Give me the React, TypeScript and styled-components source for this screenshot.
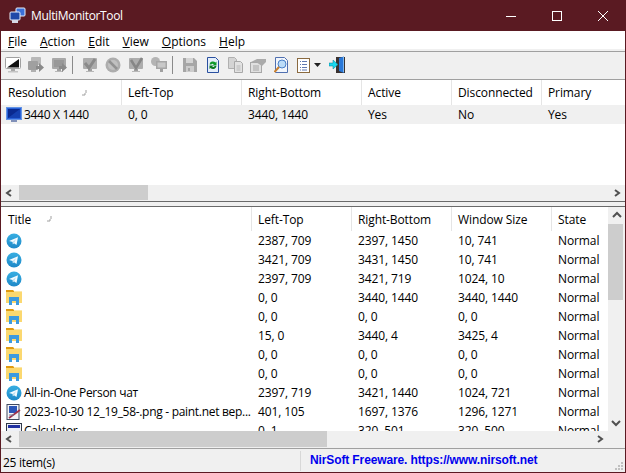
import React from "react";
import styled, { createGlobalStyle } from "styled-components";

const Global = createGlobalStyle`
  html, body { margin: 0; padding: 0; background: #fff; overflow: hidden; }
  * { box-sizing: border-box; }
`;

const Win = styled.div`
  width: 626px; height: 473px; display: flex; flex-direction: column;
  background: #f0f0f0; border: 1px solid #5a1a22; border-top: 0;
  font-family: "Open Sans", "Noto Sans", sans-serif; font-size: 12px; color: #000; overflow: hidden;
`;
const TitleBar = styled.div`
  height: 31px; flex: none; background: #5a1a22; color: #fff;
  display: flex; align-items: center; padding-left: 8px; font-size: 12px;
`;
const TitleText = styled.span`flex: 1; letter-spacing: -0.35px; margin-left: 5px;`;
const WinBtn = styled.div`
  width: 46px; height: 31px; display: flex; align-items: center; justify-content: center;
  &:last-child { margin-right: -1px; }
`;
const MenuBar = styled.div`
  height: 20px; flex: none; background: #fff; display: flex; align-items: center; padding: 2px 0 0 7px; gap: 13px;
  font-size: 12px; letter-spacing: 0; border-bottom: 2px solid #f0f0f0;
`;
const MenuItem = styled.span`
  display: inline-block;
  &::first-letter { text-decoration: underline; }
`;
const Toolbar = styled.div`
  height: 29px; flex: none; background: #f0f0f0; border-top: 1px solid #a0a0a0;
  border-bottom: 1px solid #a0a0a0; display: flex; align-items: center; padding: 0 0 1px 0;
`;
const ToolBtn = styled.div<{ $w?: number }>`
  width: ${p => p.$w ?? 23}px; height: 24px; display: flex; align-items: center; justify-content: center; flex: none;
`;
const ToolSep = styled.div`
  width: 1px; height: 18px; background: #8a8a8a; margin: 0 5px 0 2px; flex: none;
`;
const Pane = styled.div<{ $h?: number }>`
  ${p => (p.$h ? `height:${p.$h}px; flex:none;` : "flex:1; min-height:0;")}
  display: flex; flex-direction: column; background: #fff; overflow: hidden;
`;
const Splitter = styled.div`
  height: 6px; flex: none; background: #f0f0f0; border-top: 1px solid #6a6a6a; border-bottom: 1px solid #6a6a6a;
`;
const ListArea = styled.div`
  flex: 1; min-height: 0; display: flex;
`;
const ListBody = styled.div`
  flex: 1; min-width: 0; overflow: hidden;
`;
const Header = styled.div<{ $cols: string; $h: number }>`
  display: grid; grid-template-columns: ${p => p.$cols}; height: ${p => p.$h}px; background: #fff;
`;
const HeadCell = styled.div`
  padding-left: 6px; display: flex; align-items: center; white-space: nowrap; overflow: hidden;
  border-left: 1px solid #e5e5e5; font-size: 12px; letter-spacing: -0.1px;
  &:first-child { border-left: 0; padding-left: 7px; }
`;
const SortMark = styled.span`
  margin-left: 15px; line-height: 0; display: inline-flex;
`;
const Row = styled.div<{ $cols: string; $sel?: boolean }>`
  display: grid; grid-template-columns: ${p => p.$cols}; height: 19px; align-items: center;
  background: ${p => (p.$sel ? "#f0f0f0" : "#fff")}; font-size: 12px; letter-spacing: -0.1px;
`;
const Cell = styled.div`
  padding-left: 7px; white-space: nowrap; overflow: hidden;
`;
const FirstCell = styled.div`
  display: flex; align-items: center; padding-left: 5px; gap: 2px; white-space: nowrap; overflow: hidden;
  letter-spacing: -0.3px;
`;
const HBar = styled.div<{ $h: number }>`
  height: ${p => p.$h}px; flex: none; background: #f0f0f0; display: flex; align-items: stretch;
`;
const ArrowBox = styled.div<{ $w?: number; $h?: number }>`
  flex: none; width: ${p => p.$w ?? 17}px; height: ${p => p.$h ?? 17}px;
  display: flex; align-items: center; justify-content: center;
`;
const HThumb = styled.div<{ $w: number }>`
  width: ${p => p.$w}px; background: #cdcdcd; flex: none; margin-bottom: 1px;
`;
const Spacer = styled.div`flex: 1;`;
const VBar = styled.div`
  width: 17px; flex: none; background: #f0f0f0; display: flex; flex-direction: column;
`;
const VThumb = styled.div<{ $h: number }>`
  height: ${p => p.$h}px; background: #cdcdcd; flex: none; margin-right: 2px;
`;
const StatusBar = styled.div`
  height: 24px; flex: none; background: #f0f0f0; border-top: 1px solid #a0a0a0; display: flex; align-items: center;
  font-size: 12px; letter-spacing: -0.3px; position: relative; padding-top: 1px;
`;
const StatusLeft = styled.div`
  width: 300px; padding: 2px 0 0 2px; height: 20px; display: flex; align-items: center; border-right: 1px solid #d8d8d8;
`;
const StatusLink = styled.div`
  padding: 0 0 3px 9px; color: #0000ee; font: bold 12px "Liberation Sans", Arial, sans-serif; letter-spacing: -0.12px;
`;
const Grip = styled.svg`
  position: absolute; right: 1px; bottom: 1px;
`;

const Chev = ({ dir }: { dir: "l" | "r" | "u" | "d" }) => {
  const pts = { l: "6,2 2,5 6,8", r: "3,2 7,5 3,8", u: "1,6 5,2 9,6", d: "1,3 5,7 9,3" }[dir];
  return (
    <svg width="10" height="10" viewBox="0 0 10 10">
      <polyline points={pts} fill="none" stroke="#505050" strokeWidth="2" />
    </svg>
  );
};

const Telegram = () => (
  <svg width="16" height="16" viewBox="0 0 16 16" style={{ flex: "none" }}>
    <defs>
      <linearGradient id="tg" x1="0" y1="0" x2="0" y2="1">
        <stop offset="0" stopColor="#37aee2" />
        <stop offset="1" stopColor="#1e88c8" />
      </linearGradient>
    </defs>
    <circle cx="8" cy="8" r="7.5" fill="url(#tg)" />
    <path d="M3 8 L12 4.2 L10.500 12 L8 10.200 L6.800 11.300 L6.600 9 Z" fill="#f4fbff" />
    <path d="M6.600 9 L10 6.300 L8 10.200 Z" fill="#b8dcef" />
  </svg>
);
const Folder = () => (
  <svg width="16" height="16" viewBox="0 0 16 16" style={{ flex: "none" }}>
    <path d="M0 0h7l1 1v2H0z" fill="#e09a10" />
    <rect x="0" y="2" width="16" height="11" fill="#fbd870" />
    <rect x="8" y="1" width="8" height="1" fill="#fbe7a8" />
    <rect x="3" y="7" width="10" height="8" fill="#3c9ae0" />
    <rect x="6" y="11" width="4" height="4" fill="#fff" />
    <rect x="6" y="11" width="4" height="2" fill="#fbd870" />
  </svg>
);
const MonitorSel = () => (
  <svg width="16" height="16" viewBox="0 0 16 16" style={{ flex: "none" }}>
    <rect x="0" y="0" width="16" height="13" fill="#2a62d8" />
    <rect x="2" y="2" width="12" height="9" fill="#0a2a90" />
    <path d="M0.500 0.500h15v12h-15z" fill="none" stroke="#9cc4f4" strokeDasharray="1 1" />
    <path d="M2 11L14 2v9z" fill="#1440b0" />
    <rect x="5" y="13" width="6" height="2" fill="#8090b8" />
  </svg>
);
const Paint = () => (
  <svg width="16" height="16" viewBox="0 0 16 16" style={{ flex: "none" }}>
    <rect x="1" y="0.500" width="12" height="15" fill="#f4f4f8" stroke="#404a60" />
    <rect x="3" y="2" width="8" height="7" fill="#2c56b8" />
    <path d="M3 14 L14 6" stroke="#a0304a" strokeWidth="1.600" />
    <path d="M3 11h5" stroke="#707a90" />
  </svg>
);
const Calc = () => (
  <svg width="16" height="16" viewBox="0 0 16 16" style={{ flex: "none" }}>
    <rect x="0.500" y="0.500" width="15" height="15" fill="#eef0f6" stroke="#303848" />
    <rect x="2" y="2" width="12" height="3" fill="#2030a0" />
  </svg>
);

const ArrowGray = () => <path d="M8 9h3V6l5 4.500-5 4.500v-3H8z" fill="#8a8a8a" />;
const Mon = ({ fill = "#adadad" }: { fill?: string }) => (
  <>
    <rect x="1" y="1" width="14" height="11" rx="1" fill={fill} />
    <rect x="6" y="12" width="4" height="2" fill="#a0a0a0" />
    <rect x="4" y="14" width="8" height="1" fill="#b8b8b8" />
  </>
);
const Disabled = ({ k }: { k: number }) => (
  <svg width="16" height="16" viewBox="0 0 16 16">
    {k === 1 && <><rect x="3" y="0" width="10" height="8" rx="1" fill="#b8b8b8" /><rect x="0" y="4" width="10" height="9" rx="1" fill="#a0a0a0" /><rect x="3" y="13" width="5" height="2" fill="#b0b0b0" /><ArrowGray /></>}
    {k === 2 && <><Mon fill="#a8a8a8" /><rect x="3" y="3" width="10" height="7" fill="#989898" /><ArrowGray /></>}
    {k === 3 && <><Mon /><path d="M3 6l4 5 6-9" fill="none" stroke="#8a8a8a" strokeWidth="3" /></>}
    {k === 4 && <><circle cx="8" cy="8" r="7.500" fill="#adadad" /><circle cx="8" cy="8" r="5" fill="#c0c0c0" /><path d="M4 4l8 8" stroke="#929292" strokeWidth="2.500" /></>}
    {k === 5 && <><Mon /><path d="M3 3l5 8 6-10" fill="none" stroke="#868686" strokeWidth="2.500" /></>}
    {k === 6 && <><circle cx="4.500" cy="4.500" r="4.500" fill="#b4b4b4" /><rect x="5" y="4" width="11" height="8" fill="#a6a6a6" /><rect x="6.500" y="5.500" width="8" height="5" fill="#c8c8c8" /><rect x="9" y="12" width="3" height="3" fill="#a0a0a0" /></>}
    {k === 7 && <><path d="M1 1h11l3 3v11H1z" fill="#a6a6a6" /><rect x="4" y="1" width="7" height="5" fill="#d4d4d4" /><rect x="4" y="9" width="8" height="6" fill="#cccccc" /><rect x="6" y="11" width="2" height="3" fill="#a6a6a6" /></>}
  </svg>
);
const Refresh = () => (
  <svg width="16" height="16" viewBox="0 0 16 16">
    <path d="M2.500 0.500h8l3 3v12h-11z" fill="#e4eefa" stroke="#2a50a0" />
    <path d="M4.500 7.500a3.500 3.500 0 0 1 6-2l1-1v4H7.500l1.300-1.300A2 2 0 0 0 6.300 7.500z" fill="#0f9a2a" />
    <path d="M11.500 9a3.500 3.500 0 0 1-6 2l-1 1V8.500h4L7.200 9.800A2 2 0 0 0 9.700 9z" fill="#0a7a20" />
  </svg>
);
const Copy = () => (
  <svg width="16" height="16" viewBox="0 0 16 16">
    <path d="M0.500 0.500h6l2 2v9h-8z" fill="#d4d4d4" stroke="#b0b0b0" />
    <path d="M6.500 4.500h6l2 2v9h-8z" fill="#e2e2e2" stroke="#a8a8a8" />
    <path d="M8.500 9h4M8.500 11h4M8.500 13h4" stroke="#b8b8b8" />
  </svg>
);
const Props = () => (
  <svg width="17" height="16" viewBox="0 0 17 16">
    <rect x="0.500" y="5.500" width="11" height="10" fill="#e0e0e0" stroke="#a8a8a8" />
    <path d="M1 5l6-3h9v3l-4 4L6 5z" fill="#ababab" />
    <path d="M3 9h6M3 11h6M3 13h6" stroke="#a6a6a6" />
  </svg>
);
const Find = () => (
  <svg width="15" height="16" viewBox="0 0 15 16">
    <path d="M1.500 0.500h9l3 3v12h-12z" fill="#f2f6fc" stroke="#5070b0" />
    <circle cx="8" cy="7" r="4" fill="#bcdcf8" stroke="#4a80c8" />
    <path d="M5 10l-4.500 5" stroke="#c88030" strokeWidth="2" />
  </svg>
);
const ListIcon = () => (
  <svg width="13" height="15" viewBox="0 0 13 15">
    <rect x="0.500" y="0.500" width="12" height="14" fill="#fff" stroke="#8a6a40" />
    <path d="M3 3.500h1M5 3.500h5M3 6.500h1M5 6.500h5M3 9.500h1M5 9.500h5M3 12h1M5 12h5" stroke="#6078b0" />
  </svg>
);
const Exit = () => (
  <svg width="16" height="18" viewBox="0 0 16 18">
    <path d="M7 1h9v16H7z" fill="#3a3230" />
    <path d="M10 2l5-1.500V17l-5-2z" fill="#2a78d8" />
    <rect x="14" y="1" width="1" height="15" fill="#80b8f0" />
    <path d="M0 7h4V4l5 4.500L4 13v-3H0z" fill="#18d8f0" stroke="#0a7890" strokeWidth="0.500" />
  </svg>
);

const topCols = "120px 120px 120px 90px 90px 84px";
const botCols = "250px 100px 100px 100px 57px";

type W = [string, string, string, string, string, string];
const windows: W[] = [
  ["t", "", "2387, 709", "2397, 1450", "10, 741", "Normal"],
  ["t", "", "3421, 709", "3431, 1450", "10, 741", "Normal"],
  ["t", "", "2397, 709", "3421, 719", "1024, 10", "Normal"],
  ["f", "", "0, 0", "3440, 1440", "3440, 1440", "Normal"],
  ["f", "", "0, 0", "0, 0", "0, 0", "Normal"],
  ["f", "", "15, 0", "3440, 4", "3425, 4", "Normal"],
  ["f", "", "0, 0", "0, 0", "0, 0", "Normal"],
  ["f", "", "0, 0", "0, 0", "0, 0", "Normal"],
  ["t", "All-in-One Person чат", "2397, 719", "3421, 1440", "1024, 721", "Normal"],
  ["p", "2023-10-30 12_19_58-.png - paint.net вер...", "401, 105", "1697, 1376", "1296, 1271", "Normal"],
  ["c", "Calculator", "0, 1", "320, 501", "320, 500", "Normal"],
];
const iconFor = (k: string) =>
  k === "t" ? <Telegram /> : k === "f" ? <Folder /> : k === "p" ? <Paint /> : <Calc />;

const Sort = () => (
  <SortMark>
    <svg width="6" height="8" viewBox="0 0 6 8">
      <path d="M5 1v3M4 4v2M1 6h3" stroke="#a0a0a0" fill="none" />
    </svg>
  </SortMark>
);

export default function App() {
  return (
    <Win>
      <Global />
      <TitleBar>
        <svg width="17" height="17" viewBox="0 0 17 17" style={{ flex: "none" }}>
          <rect x="7" y="1" width="9" height="8" rx="1" fill="#3a70d8" stroke="#e8eefa" />
          <rect x="1" y="5" width="10" height="8" rx="1" fill="#1f48a8" stroke="#e8eefa" />
          <rect x="3" y="13" width="6" height="3" fill="#d4d9e6" />
        </svg>
        <TitleText>MultiMonitorTool</TitleText>
        <WinBtn>
          <svg width="10" height="10" viewBox="0 0 10 10"><path d="M0 5.500h10" stroke="#fff" /></svg>
        </WinBtn>
        <WinBtn>
          <svg width="10" height="10" viewBox="0 0 10 10"><rect x="0.500" y="0.500" width="9" height="9" fill="none" stroke="#fff" /></svg>
        </WinBtn>
        <WinBtn>
          <svg width="10" height="10" viewBox="0 0 10 10"><path d="M0 0l10 10M10 0L0 10" stroke="#fff" /></svg>
        </WinBtn>
      </TitleBar>
      <MenuBar>
        {["File", "Action", "Edit", "View", "Options", "Help"].map(m => <MenuItem key={m}>{m}</MenuItem>)}
      </MenuBar>
      <Toolbar>
        <ToolBtn>
          <svg width="16" height="16" viewBox="0 0 16 16">
            <rect x="0.500" y="0.500" width="15" height="11" rx="1" fill="#fff" stroke="#a0a0a0" strokeWidth="1" />
            <path d="M2 10.500L14 2v8.500z" fill="#111" />
            <rect x="6" y="12" width="4" height="2" fill="#a8a8a8" />
            <rect x="3" y="14" width="10" height="1.500" fill="#c4c4c4" />
          </svg>
        </ToolBtn>
        <ToolBtn><Disabled k={1} /></ToolBtn>
        <ToolBtn><Disabled k={2} /></ToolBtn>
        <ToolSep />
        <ToolBtn><Disabled k={3} /></ToolBtn>
        <ToolBtn><Disabled k={4} /></ToolBtn>
        <ToolBtn><Disabled k={5} /></ToolBtn>
        <ToolBtn><Disabled k={6} /></ToolBtn>
        <ToolSep />
        <ToolBtn><Disabled k={7} /></ToolBtn>
        <ToolBtn><Refresh /></ToolBtn>
        <ToolBtn><Copy /></ToolBtn>
        <ToolBtn><Props /></ToolBtn>
        <ToolBtn><Find /></ToolBtn>
        <ToolBtn $w={32}>
          <ListIcon />
          <svg width="8" height="5" viewBox="0 0 8 5" style={{ marginLeft: 4 }}><path d="M0 0h7L3.500 4z" fill="#222" /></svg>
        </ToolBtn>
        <ToolBtn><Exit /></ToolBtn>
      </Toolbar>
      <Pane $h={121}>
        <ListArea>
          <ListBody>
            <Header $cols={topCols} $h={25}>
              <HeadCell>Resolution<Sort /></HeadCell>
              <HeadCell>Left-Top</HeadCell>
              <HeadCell>Right-Bottom</HeadCell>
              <HeadCell>Active</HeadCell>
              <HeadCell>Disconnected</HeadCell>
              <HeadCell>Primary</HeadCell>
            </Header>
            <Row $cols={topCols} $sel>
              <FirstCell><MonitorSel />3440 X 1440</FirstCell>
              <Cell>0, 0</Cell>
              <Cell>3440, 1440</Cell>
              <Cell>Yes</Cell>
              <Cell>No</Cell>
              <Cell>Yes</Cell>
            </Row>
          </ListBody>
        </ListArea>
        <HBar $h={16}>
          <ArrowBox $w={18} $h={15}><Chev dir="l" /></ArrowBox>
          <HThumb $w={129} />
          <Spacer />
          <ArrowBox $h={15}><Chev dir="r" /></ArrowBox>
        </HBar>
      </Pane>
      <Splitter />
      <Pane>
        <ListArea>
          <ListBody>
            <Header $cols={botCols} $h={24}>
              <HeadCell>Title<Sort /></HeadCell>
              <HeadCell>Left-Top</HeadCell>
              <HeadCell>Right-Bottom</HeadCell>
              <HeadCell>Window Size</HeadCell>
              <HeadCell>State</HeadCell>
            </Header>
            {windows.map((w, i) => (
              <Row $cols={botCols} key={i}>
                <FirstCell>{iconFor(w[0])}{w[1]}</FirstCell>
                <Cell>{w[2]}</Cell>
                <Cell>{w[3]}</Cell>
                <Cell>{w[4]}</Cell>
                <Cell>{w[5]}</Cell>
              </Row>
            ))}
          </ListBody>
          <VBar>
            <ArrowBox><Chev dir="u" /></ArrowBox>
            <VThumb $h={76} />
            <Spacer />
            <ArrowBox $w={15}><Chev dir="d" /></ArrowBox>
          </VBar>
        </ListArea>
        <HBar $h={17}>
          <ArrowBox $w={18} $h={16}><Chev dir="l" /></ArrowBox>
          <HThumb $w={308} />
          <Spacer />
          <ArrowBox $h={16}><Chev dir="r" /></ArrowBox>
          <ArrowBox $h={16} />
        </HBar>
      </Pane>
      <StatusBar>
        <StatusLeft>25 item(s)</StatusLeft>
        <StatusLink>NirSoft Freeware. https://www.nirsoft.net</StatusLink>
        <Grip width="12" height="12" viewBox="0 0 12 12">
          <path d="M9 3h2v2H9zM6 6h2v2H6zM9 6h2v2H9zM3 9h2v2H3zM6 9h2v2H6zM9 9h2v2H9z" fill="#c0c0c0" />
        </Grip>
      </StatusBar>
    </Win>
  );
}
